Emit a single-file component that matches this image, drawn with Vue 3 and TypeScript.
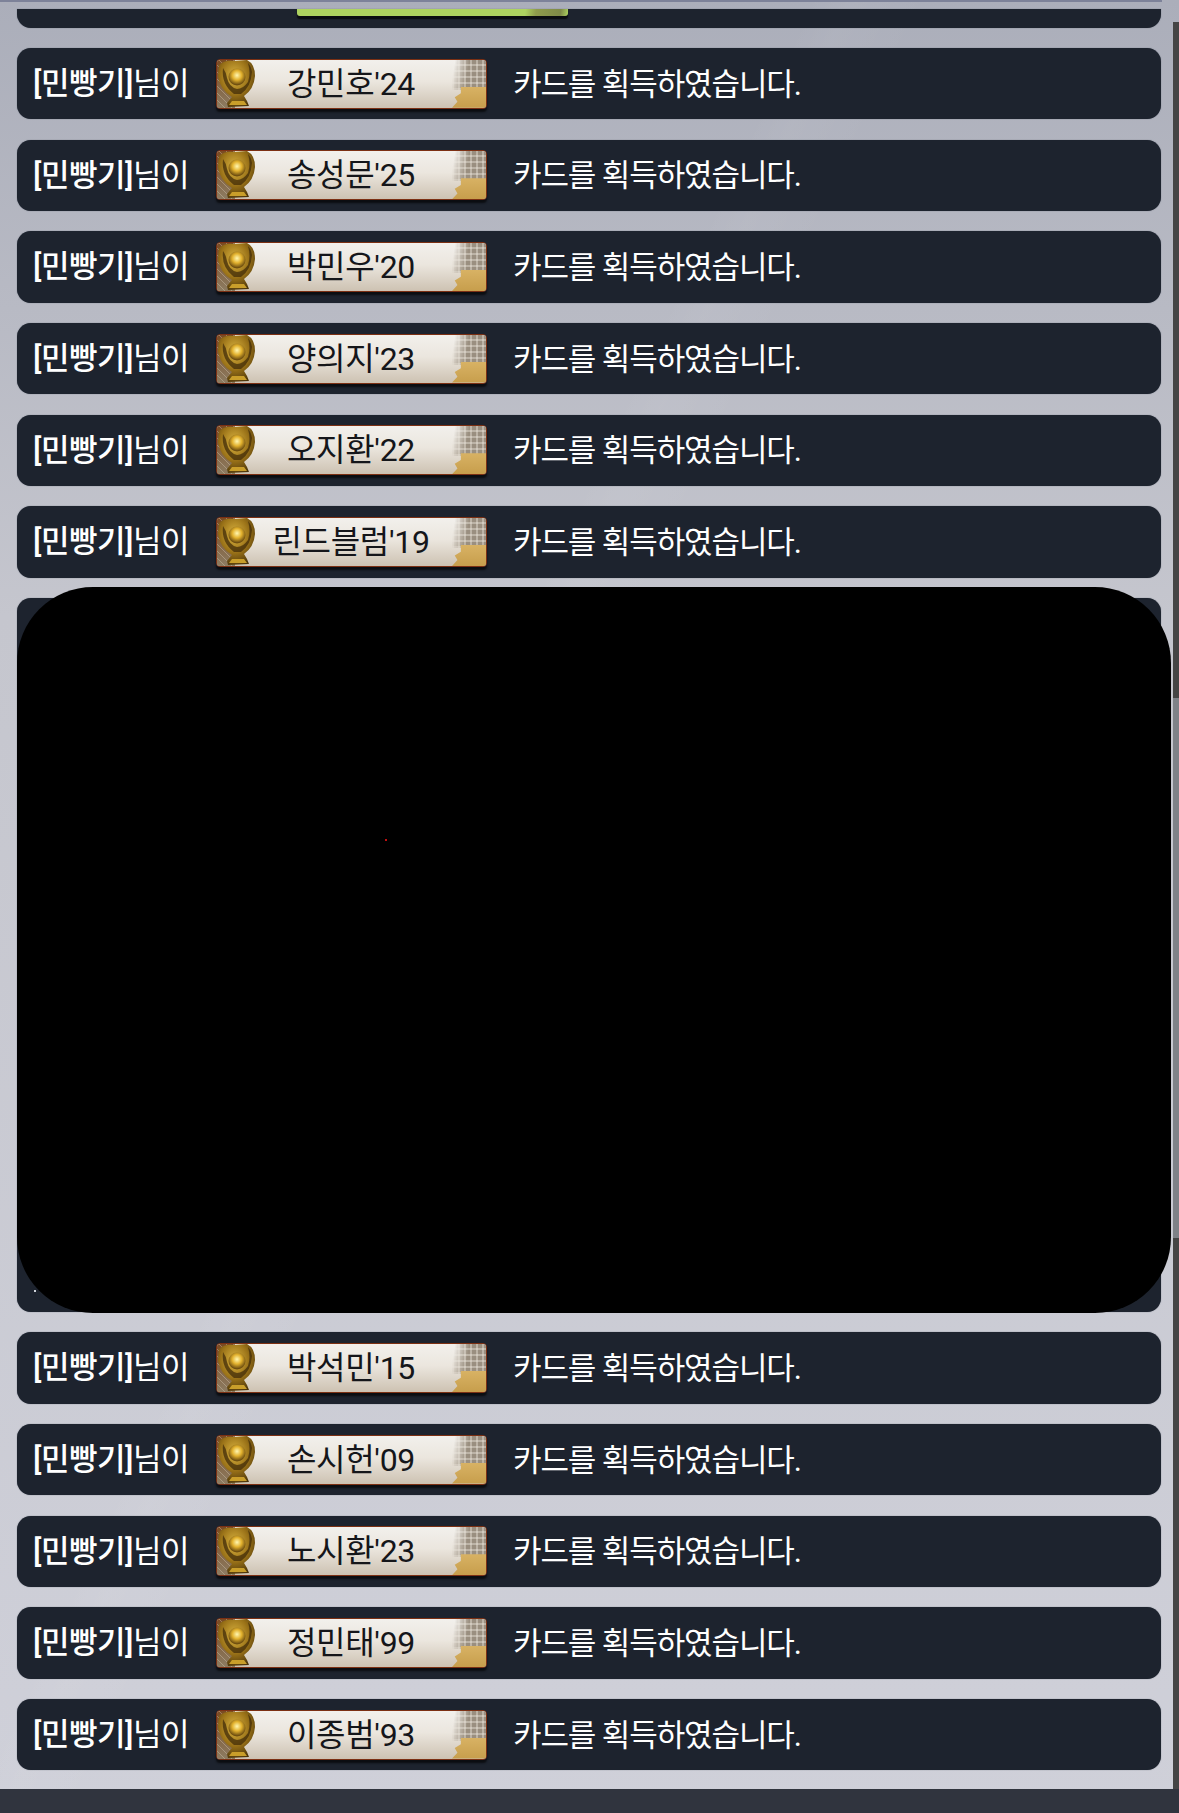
<script setup lang="ts">
// null 자리는 검은 영역에 가려진 줄 (높이가 큰 빈 카드)
const rows: (string | null)[] = [
  "강민호'24",
  "송성문'25",
  "박민우'20",
  "양의지'23",
  "오지환'22",
  "린드블럼'19",
  null,
  "박석민'15",
  "손시헌'09",
  "노시환'23",
  "정민태'99",
  "이종범'93",
]
</script>

<template>
  <div class="page">
    <svg class="defs" aria-hidden="true">
      <defs>
        <radialGradient id="gold" cx="0.45" cy="0.35" r="0.7">
          <stop offset="0" stop-color="#dcb540" />
          <stop offset="0.55" stop-color="#9a7218" />
          <stop offset="1" stop-color="#4a340b" />
        </radialGradient>
        <radialGradient id="ball" cx="0.5" cy="0.4" r="0.55">
          <stop offset="0" stop-color="#fff6b0" />
          <stop offset="0.5" stop-color="#e3b22e" />
          <stop offset="1" stop-color="#6e4e10" />
        </radialGradient>
        <symbol id="glove" viewBox="0 0 40 50">
          <path d="M2 6 Q8 1 16 2 L30 1 Q38 5 38 17 Q37 30 27 37 L30 42 L32 47 L11 48 L10 44 L15 38 Q3 31 1 17 Z" fill="url(#gold)" />
          <path d="M6 9 Q4 25 17 35 L24 35 Q34 28 35 13 Q34 7 31 4 Q34 14 31 23 Q26 30 20 30 Q12 28 10 19 Q9 13 6 9 Z" fill="#3e2a08" opacity=".72" />
          <path d="M15 42 L27 42 L30 46 L12 46 Z" fill="#c99e2a" />
          <circle cx="20" cy="18" r="8.5" fill="url(#ball)" />
        </symbol>
      </defs>
    </svg>

    <div class="body">
      <main class="list">
        <div class="row row-cut">
          <div class="green-strip"></div>
        </div>

        <template v-for="(name, i) in rows" :key="i">
          <div v-if="name" class="row">
            <span class="who"><b>[민빵기]</b>님이</span>
            <div class="badge">
              <span class="grain"></span>
              <svg class="glove" aria-hidden="true"><use href="#glove" /></svg>
              <span class="name">{{ name }}</span>
              <div class="corner">
                <span class="mesh"></span>
                <span class="sand"></span>
              </div>
            </div>
            <span class="msg">카드를 획득하였습니다.</span>
          </div>
          <div v-else class="row row-hidden"></div>
        </template>

        <!-- 검은 가림막 -->
        <div class="cover"><i class="red-dot"></i></div>
        <i class="white-dot"></i>
      </main>
      <div class="scroll">
        <div class="scroll-top"></div>
        <div class="scroll-thumb"></div>
        <div class="scroll-rest"></div>
      </div>
    </div>
    <div class="footer"></div>
  </div>
</template>

<style>
html,
body {
  margin: 0;
  background: #30343e;
}
</style>

<style scoped>
.page {
  width: 1179px;
  height: 1813px;
  display: flex;
  flex-direction: column;
  overflow: hidden;
  font-family: Roboto, "Noto Sans CJK KR", sans-serif;
  background:
    linear-gradient(115deg, transparent 40%, rgba(255, 255, 255, 0.04) 42%, transparent 46%),
    linear-gradient(180deg, #abaeba 0%, #c5c6ce 34%, #cfd0d9 100%);
}

.defs {
  position: absolute;
  width: 0;
  height: 0;
}

.body {
  flex: 1;
  display: flex;
  min-height: 0;
}

.list {
  position: relative;
  flex: 1;
  padding: 9px 12px 0 17px;
  display: flex;
  flex-direction: column;
  gap: 20.33px;
  box-sizing: border-box;
  border-top: 2px solid #7d8299;
  border-image: linear-gradient(90deg, #7d8299 99%, transparent 99%) 1;
}

.row {
  height: 71.33px;
  flex: none;
  display: flex;
  align-items: center;
  padding-left: 16px;
  box-sizing: border-box;
  background: #1d232e;
  border-radius: 14px;
  box-shadow: 0 0 1px rgba(70, 76, 90, 0.9);
  color: #fff;
}

.row-cut {
  height: 18.67px;
  align-items: flex-start;
  border-radius: 0 0 14px 14px;
  margin-top: -2px;
}

.green-strip {
  margin-left: 264px;
  width: 271px;
  height: 6.5px;
  border-radius: 0 0 3px 3px;
  background: linear-gradient(100deg, #aed360 84%, #8f9c4c 88%, #7f8a48 97%, #aed360 100%);
  box-shadow: 0 2.5px 1px #0b0d11;
}

.row-hidden {
  height: 714px;
}

.who {
  width: 183px;
  flex: none;
  margin-top: -6px;
  font-size: 31px;
  letter-spacing: -0.5px;
  white-space: nowrap;
}

.who b {
  font-weight: 500;
}

.badge {
  position: relative;
  flex: none;
  width: 271px;
  height: 50px;
  box-sizing: border-box;
  display: flex;
  align-items: center;
  justify-content: center;
  padding-right: 1px;
  border: 1px solid #7c3013;
  border-radius: 4px;
  background: linear-gradient(180deg, #f2f0ec 0%, #ebe6de 45%, #cdc2b2 100%);
  box-shadow: 0 3px 2px #0b0d11;
}

.grain {
  position: absolute;
  left: 0;
  top: 0;
  bottom: 0;
  width: 18px;
  border-radius: 3px 0 0 3px;
  background:
    repeating-linear-gradient(45deg, rgba(225, 215, 195, 0.35) 0 1px, transparent 1px 5px),
    linear-gradient(180deg, #7a4a22, #8d7c62);
}

.glove {
  position: absolute;
  left: 0;
  top: -1px;
  width: 40px;
  height: 50px;
}

.name {
  position: relative;
  margin-top: -6px;
  color: #15161a;
  font-size: 32px;
  letter-spacing: -0.3px;
  white-space: nowrap;
}

.corner {
  position: absolute;
  right: 0;
  top: 0;
  bottom: 0;
  width: 34px;
  overflow: hidden;
  border-radius: 0 3px 3px 0;
}

.mesh {
  position: absolute;
  top: 0;
  left: 0;
  right: 0;
  height: 30px;
  background:
    repeating-linear-gradient(0deg, rgba(240, 235, 225, 0.4) 0 2px, transparent 2px 6px),
    repeating-linear-gradient(90deg, rgba(240, 235, 225, 0.4) 0 2px, transparent 2px 6px),
    #9a8f80;
  -webkit-mask-image: linear-gradient(100deg, transparent 8%, #000 45%);
  mask-image: linear-gradient(100deg, transparent 8%, #000 45%);
}

.sand {
  position: absolute;
  bottom: 0;
  left: 0;
  right: 0;
  height: 21px;
  background: linear-gradient(180deg, #d8b264, #c79e4c);
  clip-path: polygon(26% 0, 100% 0, 100% 100%, 0 100%, 16% 72%, 8% 50%, 26% 32%);
}

.msg {
  margin-top: -5px;
  margin-left: 26px;
  font-size: 31px;
  letter-spacing: -1.1px;
  white-space: nowrap;
}

.cover {
  position: absolute;
  left: 17px;
  top: 585px;
  width: 1154px;
  height: 726px;
  background: #000;
  border-radius: 76px;
}

.red-dot {
  position: absolute;
  left: 368px;
  top: 252px;
  width: 2px;
  height: 2px;
  background: #c01010;
}

.white-dot {
  position: absolute;
  left: 34px;
  top: 1288px;
  width: 2px;
  height: 2px;
  background: #cfd3da;
}

.scroll {
  flex: none;
  width: 6px;
  padding-top: 22px;
  display: flex;
  flex-direction: column;
}

.scroll-top {
  height: 676px;
  flex: none;
  background: #454545;
}

.scroll-thumb {
  height: 540px;
  flex: none;
  background: #7f8288;
}

.scroll-rest {
  flex: 1;
  background: #454545;
}

.footer {
  flex: none;
  height: 24.3px;
  background: #30343e;
}
</style>
